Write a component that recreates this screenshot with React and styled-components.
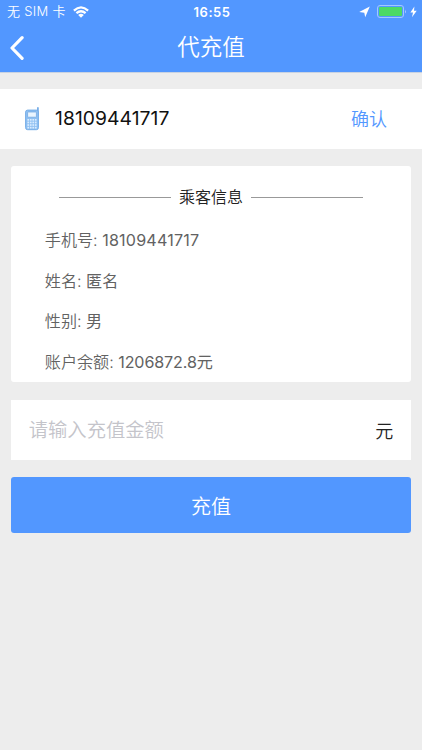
import React from 'react'
import styled, { createGlobalStyle } from 'styled-components'

const details = [
  { label: '手机号', value: '18109441717', spacing: '0.2px' },
  { label: '姓名', value: '匿名' },
  { label: '性别', value: '男' },
  { label: '账户余额', value: '1206872.8元', spacing: '-0.12px' },
]

function StatusIcons() {
  return (
    <StatusRight>
      <svg width="11" height="12" viewBox="0 0 11 12">
        <path d="M10.8 0.6 L6.2 11.2 L5.3 6.7 L0.2 6 Z" fill="#fff" />
      </svg>
      <svg width="30" height="13" viewBox="0 0 30 13">
        <rect x="0.5" y="0.5" width="26" height="12" rx="2.5" fill="none" stroke="#a3c8ff" />
        <rect x="2" y="2" width="23" height="9" rx="1" fill="#4cd964" />
        <path d="M28 4.5 Q29.6 6.5 28 8.5 Z" fill="#b3d0ff" />
      </svg>
      <svg width="7" height="12" viewBox="0 0 7 12">
        <path d="M4.4 0.6 L0.4 6.4 H3 L2 11.2 L6.7 4.8 H4 Z" fill="#fff" />
      </svg>
    </StatusRight>
  )
}

function WifiIcon() {
  return (
    <svg width="16" height="12" viewBox="0 0 16 12">
      <g fill="none" stroke="#fff" strokeWidth="2.3">
        <path d="M0.9 4.6 Q8 -1.8 15.1 4.6" />
        <path d="M3.4 7.2 Q8 3.2 12.6 7.2" />
      </g>
      <path d="M5.2 8.9 Q8 6.7 10.8 8.9 L8 11.7 Z" fill="#fff" />
    </svg>
  )
}

function PhoneIcon() {
  return (
    <svg width="15" height="24" viewBox="0 0 15 24">
      <path d="M12.9 1 V8" stroke="#78aee8" strokeWidth="1.8" strokeLinecap="round" />
      <rect x="0.6" y="3.1" width="12.8" height="19.6" rx="2" fill="#8fc0f2" stroke="#76ade7" />
      <rect x="2.6" y="5" width="8.8" height="5.2" rx="0.7" fill="#eaf5ff" stroke="#6ba3df" strokeWidth="0.7" />
      <g fill="#d9ecff">
        {[12, 14.6, 17.2, 19.8].map(y =>
          [2.4, 4.9, 7.4, 9.9].map(x => <rect key={`${x}-${y}`} x={x} y={y} width="1.7" height="1.7" />)
        )}
      </g>
    </svg>
  )
}

function App() {
  return (
    <Page>
      <GlobalStyle />
      <Header>
        <StatusBar>
          <Carrier>无 SIM 卡 <WifiIcon /></Carrier>
          <Clock>16:55</Clock>
          <StatusIcons />
        </StatusBar>
        <NavBar>
          <BackButton aria-label="返回">
            <svg width="14" height="24" viewBox="0 0 14 24">
              <path d="M12.1 1.7 L2 12 L12.1 22.3" fill="none" stroke="#fff" strokeWidth="3.2" strokeLinecap="round" strokeLinejoin="round" />
            </svg>
          </BackButton>
          <Title>代充值</Title>
        </NavBar>
      </Header>

      <PhoneRow>
        <PhoneIcon />
        <PhoneNumber>18109441717</PhoneNumber>
        <Confirm>确认</Confirm>
      </PhoneRow>

      <Card>
        <CardTitle>乘客信息</CardTitle>
        {details.map(item => (
          <Detail key={item.label} $spacing={item.spacing}>{item.label}: <span>{item.value}</span></Detail>
        ))}
      </Card>

      <AmountRow>
        <AmountInput placeholder="请输入充值金额" />
        <Unit>元</Unit>
      </AmountRow>

      <Submit>充值</Submit>
    </Page>
  )
}

export default App

const GlobalStyle = createGlobalStyle`
  * {
    box-sizing: border-box;
  }
  body {
    margin: 0;
    background: #ededed;
  }
  button, input {
    font-family: inherit;
    font-weight: inherit;
    border: 0;
    padding: 0;
    background: none;
  }
`

const Page = styled.div`
  min-height: 750px;
  background: #ededed;
  font-family: Inter, "Noto Sans CJK SC", sans-serif;
  font-weight: 350;
  display: flex;
  flex-direction: column;
`

const Header = styled.header`
  height: 72px;
  background: #5297ff;
  box-shadow: 0 1px 0 #c9d3e2;
  color: #fff;
`

const StatusBar = styled.div`
  height: 23px;
  padding: 0 5px 0 7px;
  display: grid;
  grid-template-columns: 1fr auto 1fr;
  align-items: center;
`

const Carrier = styled.div`
  display: flex;
  align-items: center;
  gap: 3px;
  font-size: 13px;
  line-height: 23px;
  letter-spacing: 0.3px;
  white-space: pre;
`

const Clock = styled.div`
  font-size: 13px;
  font-weight: 600;
  letter-spacing: 0.5px;
`

const StatusRight = styled.div`
  display: flex;
  justify-content: flex-end;
  align-items: center;
  gap: 4px;

  svg:first-child {
    margin-right: 3px;
  }
  svg:last-child {
    margin-left: -1px;
  }
`

const NavBar = styled.div`
  height: 49px;
  padding: 0 10px;
  display: grid;
  grid-template-columns: 40px 1fr 40px;
  align-items: center;
`

const BackButton = styled.button`
  display: flex;
`

const Title = styled.h1`
  margin: 0 0 2px;
  font-size: 22.5px;
  line-height: 30px;
  font-weight: inherit;
  text-align: center;
`

const PhoneRow = styled.div`
  height: 60px;
  margin-top: 17px;
  padding: 0 35px 0 25px;
  background: #fff;
  display: flex;
  align-items: center;
`

const PhoneNumber = styled.span`
  flex: 1;
  margin: 0 0 2px 15px;
  color: #111;
  font-size: 19.3px;
  font-weight: 400;
  letter-spacing: 0.06px;
`

const Confirm = styled.button`
  margin-bottom: 2px;
  color: #5297ff;
  font-size: 18px;
`

const Card = styled.section`
  height: 216px;
  margin: 17px 11.3px 0;
  padding: 15px 33.5px 0;
  background: #fff;
  border-radius: 3px;
`

const CardTitle = styled.h2`
  margin: 0 14px 6px;
  display: flex;
  align-items: center;
  gap: 8px;
  color: #222;
  font-size: 16px;
  line-height: 33px;
  font-weight: inherit;

  &::before,
  &::after {
    content: '';
    flex: 1;
    height: 1px;
    background: #999;
  }
`

const Detail = styled.p`
  margin: 0;
  color: #626262;
  font-size: 16.1px;
  line-height: 40.5px;

  span {
    font-weight: 400;
    letter-spacing: ${props => props.$spacing || 'normal'};
  }
`

const AmountRow = styled.div`
  height: 60px;
  margin: 18px 11.3px 0;
  padding: 0 17.5px;
  background: #fff;
  display: flex;
  align-items: center;
`

const AmountInput = styled.input`
  flex: 1;
  min-width: 0;
  height: 40px;
  outline: none;
  font-size: 19.3px;

  &::placeholder {
    color: #c4c4ca;
  }
`

const Unit = styled.span`
  color: #222;
  font-size: 18px;
`

const Submit = styled.button`
  height: 56px;
  margin: 17px 11.3px 0;
  background: #5297ff;
  border-radius: 3px;
  color: #fff;
  font-size: 20px;
`
